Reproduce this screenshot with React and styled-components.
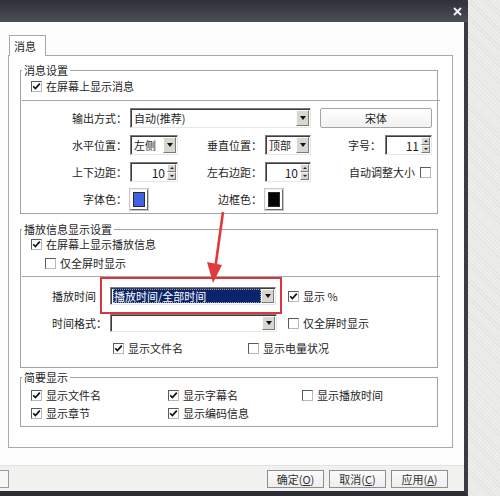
import React from 'react';
import styled, { createGlobalStyle } from 'styled-components';

// Classic-style settings dialog, "消息" tab

const GlobalStyle = createGlobalStyle`
  *, *::before, *::after { box-sizing: border-box; }
  html, body { margin: 0; padding: 0; }
  body {
    width: 500px;
    height: 496px;
    overflow: hidden;
    background: #e9e9e7;
    font-family: 'Noto Sans CJK SC', 'Liberation Sans', sans-serif;
    font-size: 11px;
    color: #1e1e1e;
  }
`;

const Page = styled.div`
  position: relative;
  width: 500px;
  height: 496px;
  display: flex;
  background: repeating-linear-gradient(45deg, #ededeb 0 2px, #e3e3e1 2px 3px);
`;

const Window = styled.div`
  width: 468px;
  height: 496px;
  display: flex;
  flex-direction: column;
  background: #fcfcfc;
  border-right: 4px solid #3a3c44;
  border-bottom: 5px solid #2c2e34;
`;

const TitleBar = styled.div`
  height: 22px;
  flex: none;
  display: flex;
  justify-content: flex-end;
  align-items: center;
  padding-right: 2px;
  background: linear-gradient(#2f3139, #4b4e58);
  border-top-right-radius: 5px;
  margin-right: -4px;
`;

const CloseIcon = styled.svg`
  width: 9px;
  height: 9px;
  margin-right: 4px;
`;

const Body = styled.div`
  flex: 1;
  display: flex;
  flex-direction: column;
  padding: 13px 0 0 8px;
`;

const TabStrip = styled.div`
  display: flex;
  height: 21px;
  margin-bottom: -1px;
  padding-left: 1px;
`;

const Tab = styled.div`
  position: relative;
  z-index: 1;
  width: 37px;
  height: 21px;
  border: 1px solid #a9a9a9;
  border-bottom: none;
  background: #fff;
  padding-left: 4px;
  line-height: 20px;
`;

const Panel = styled.div`
  width: 445px;
  height: 393px;
  border: 1px solid #a9a9a9;
  background: #fff;
  padding: 7px 0 0 11px;
`;

const Group = styled.fieldset`
  width: 418px;
  margin: ${p => p.$top || 0}px 0 0 0;
  padding: 0 6px ${p => p.$bottom || 4}px 10px;
  border: 1px solid #a3a3a3;
  min-width: 0;
`;

const Legend = styled.legend`
  margin-left: -9px;
  padding: 0 2px;
  line-height: 14px;
`;

const Separator = styled.div`
  height: 1px;
  margin: 5px -9px 0 -9px;
  background: #a8a8a8;
`;

const Line = styled.div`
  display: flex;
  align-items: center;
  height: ${p => p.$h || 18}px;
  margin-top: ${p => p.$mt || 0}px;
  padding-left: ${p => p.$indent || 0}px;
`;

const SettingsGrid = styled.div`
  display: grid;
  grid-template-columns: 99px 48px 87px 46px 74px 47px;
  grid-auto-rows: 20px;
  row-gap: 7px;
  margin-top: 7px;
  align-items: center;
`;

const FieldLabel = styled.span`
  justify-self: end;
  padding-right: ${p => p.$pr ?? 3}px;
  white-space: nowrap;
`;

const Span = styled.div`
  grid-column: ${p => p.$col};
  display: flex;
  align-items: center;
  justify-content: ${p => p.$justify || 'flex-start'};
  height: 20px;
  padding-left: ${p => p.$pl || 0}px;
  padding-right: ${p => p.$pr || 0}px;
`;

const PlayGrid = styled.div`
  display: grid;
  grid-template-columns: 79px 167px auto;
  align-items: center;
`;

const PlayLabel = styled.span`
  padding-left: 21px;
  white-space: nowrap;
`;

const BriefGrid = styled.div`
  display: grid;
  grid-template-columns: 137px 134px auto;
  grid-auto-rows: 18px;
  align-items: center;
  margin-top: 2px;
`;

const Sunken = styled.div`
  display: flex;
  align-items: stretch;
  width: ${p => p.$w}px;
  height: ${p => p.$h || 20}px;
  border: 1px solid;
  border-color: #7c7c7c #e6e6e6 #e6e6e6 #7c7c7c;
  box-shadow: inset 1px 1px 0 #3c3c3c;
  background: #fff;
  padding: 1px 1px 1px 2px;
`;

const SelectText = styled.div`
  flex: 1;
  display: flex;
  align-items: center;
  padding-left: 1px;
  white-space: nowrap;
  overflow: hidden;
  color: ${p => (p.$active ? '#fff' : 'inherit')};
  background: ${p => (p.$active ? '#0b246b' : 'transparent')};
  outline: ${p => (p.$active ? '1px dotted #8fa0d0' : 'none')};
  outline-offset: -1px;
`;

const DropButton = styled.div`
  width: 13px;
  flex: none;
  display: flex;
  align-items: center;
  justify-content: center;
  background: #d9d6cf;
  border: 1px solid;
  border-color: #fafafa #7a7a7a #7a7a7a #fafafa;
  &::after {
    content: '';
    border-left: 3.5px solid transparent;
    border-right: 3.5px solid transparent;
    border-top: 4px solid #111;
  }
`;

const SpinValue = styled.div`
  flex: 1;
  display: flex;
  align-items: center;
  justify-content: flex-end;
  padding-right: 2px;
  font-size: 12px;
`;

const SpinButtons = styled.div`
  width: 9px;
  flex: none;
  display: flex;
  flex-direction: column;
`;

const SpinArrow = styled.div`
  flex: 1;
  display: flex;
  align-items: center;
  justify-content: center;
  background: #d9d6cf;
  border: 1px solid;
  border-color: #fafafa #7a7a7a #7a7a7a #fafafa;
  &::after {
    content: '';
    border-left: 2px solid transparent;
    border-right: 2px solid transparent;
    ${p => (p.$up ? 'border-bottom: 2px solid #222;' : 'border-top: 2px solid #222;')}
  }
`;

const Swatch = styled.div`
  width: 18px;
  height: 21px;
  border: 1px solid;
  border-color: #f4f4f4 #6c6c6c #6c6c6c #f4f4f4;
  box-shadow: 0 0 0 1px #c8c8c8;
  padding: 2px;
  &::after {
    content: '';
    display: block;
    width: 100%;
    height: 100%;
    background: ${p => p.$color};
    border: 1px solid #2a2a2a;
  }
`;

const FontButton = styled.div`
  width: 112px;
  height: 20px;
  margin-left: 9px;
  display: flex;
  align-items: center;
  justify-content: center;
  border: 1px solid #a4a4a4;
  border-radius: 2px;
  background: linear-gradient(#ffffff, #f1f1f1);
`;

const CheckItem = styled.label`
  display: inline-flex;
  align-items: center;
  gap: 4px;
  white-space: nowrap;
`;

const Box = styled.span`
  width: 11px;
  height: 11px;
  flex: none;
  display: inline-flex;
  align-items: center;
  justify-content: center;
  border: 1px solid;
  border-color: #5a5a5a #b8b8b8 #b8b8b8 #5a5a5a;
  background: #fff;
`;

const Footer = styled.div`
  height: 26px;
  flex: none;
  display: flex;
  align-items: flex-start;
  padding: 4px 16px 0 0;
  background: #f1f1f0;
  border-top: 1px solid #e2e2e2;
`;

const EdgeButton = styled.div`
  width: 9px;
  height: 18px;
  border: 1px solid #9a9a9a;
  border-left: none;
  background: #f6f6f6;
`;

const ButtonRow = styled.div`
  display: flex;
  gap: 5px;
  margin-left: auto;
`;

const DialogButton = styled.div`
  width: 57px;
  height: 18px;
  display: flex;
  align-items: center;
  justify-content: center;
  border: 1px solid #8e8e8e;
  background: linear-gradient(#fbfbfb, #eeeeee);
  color: #333;
  u { text-decoration: underline; }
`;

const Highlight = styled.div`
  position: absolute;
  left: 100px;
  top: 277px;
  width: 182px;
  height: 37px;
  border: 2px solid #d5383f;
  pointer-events: none;
`;

const ArrowLayer = styled.svg`
  position: absolute;
  left: 0;
  top: 0;
  width: 500px;
  height: 496px;
  pointer-events: none;
`;

const Check = ({ checked, children }) => (
  <CheckItem>
    <Box>
      {checked && (
        <svg width="9" height="9" viewBox="0 0 9 9">
          <path d="M1.2 4.2 L3.4 6.6 L7.8 1.6" fill="none" stroke="#111" strokeWidth="1.7" />
        </svg>
      )}
    </Box>
    {children}
  </CheckItem>
);

const Select = ({ w, h, value, active }) => (
  <Sunken $w={w} $h={h}>
    <SelectText $active={active}>{value}</SelectText>
    <DropButton />
  </Sunken>
);

const Spinner = ({ w, value }) => (
  <Sunken $w={w}>
    <SpinValue>{value}</SpinValue>
    <SpinButtons>
      <SpinArrow $up />
      <SpinArrow />
    </SpinButtons>
  </Sunken>
);

const App = () => {
  return (
    <Page>
      <GlobalStyle />
      <Window>
        <TitleBar>
          <CloseIcon viewBox="0 0 9 9">
            <path d="M1 1 L8 8 M8 1 L1 8" stroke="#f2f2f2" strokeWidth="2" />
          </CloseIcon>
        </TitleBar>

        <Body>
          <TabStrip>
            <Tab>消息</Tab>
          </TabStrip>
          <Panel>
            <Group>
              <Legend>消息设置</Legend>
              <Line>
                <Check checked>在屏幕上显示消息</Check>
              </Line>
              <Separator />
              <SettingsGrid>
                <FieldLabel>输出方式：</FieldLabel>
                <Span $col="2 / 5">
                  <Select w={181} value="自动(推荐)" />
                </Span>
                <Span $col="5 / 7">
                  <FontButton>宋体</FontButton>
                </Span>

                <FieldLabel>水平位置：</FieldLabel>
                <Select w={48} value="左侧" />
                <FieldLabel>垂直位置：</FieldLabel>
                <Select w={46} value="顶部" />
                <FieldLabel $pr={4}>字号：</FieldLabel>
                <Spinner w={47} value="11" />

                <FieldLabel>上下边距：</FieldLabel>
                <Spinner w={48} value="10" />
                <FieldLabel>左右边距：</FieldLabel>
                <Spinner w={46} value="10" />
                <Span $col="5 / 7" $justify="flex-end" $pr={1}>
                  <CheckItem style={{ flexDirection: 'row-reverse', gap: 5 }}>
                    <Box />
                    自动调整大小
                  </CheckItem>
                </Span>

                <FieldLabel>字体色：</FieldLabel>
                <Swatch $color="#3f63e2" />
                <FieldLabel>边框色：</FieldLabel>
                <Swatch $color="#050505" />
              </SettingsGrid>
            </Group>

            <Group $top={8} $bottom={11}>
              <Legend>播放信息显示设置</Legend>
              <Line $h={16}>
                <Check checked>在屏幕上显示播放信息</Check>
              </Line>
              <Line $h={16} $mt={3} $indent={14}>
                <Check>仅全屏时显示</Check>
              </Line>
              <Separator />
              <PlayGrid style={{ marginTop: 10, rowGap: 9 }}>
                <PlayLabel>播放时间</PlayLabel>
                <Select w={166} h={18} value="播放时间/全部时间" active />
                <Line style={{ paddingLeft: 11 }}>
                  <Check checked>显示 %</Check>
                </Line>

                <PlayLabel>时间格式：</PlayLabel>
                <Select w={167} h={18} value="" />
                <Line style={{ paddingLeft: 11 }}>
                  <Check>仅全屏时显示</Check>
                </Line>
              </PlayGrid>
              <Line $mt={8} $h={16} style={{ paddingLeft: 82, gap: 0 }}>
                <span style={{ width: 135 }}>
                  <Check checked>显示文件名</Check>
                </span>
                <Check>显示电量状况</Check>
              </Line>
            </Group>

            <Group $top={2}>
              <Legend>简要显示</Legend>
              <BriefGrid>
                <Check checked>显示文件名</Check>
                <Check checked>显示字幕名</Check>
                <Check>显示播放时间</Check>
                <Check checked>显示章节</Check>
                <Check checked>显示编码信息</Check>
              </BriefGrid>
            </Group>
          </Panel>
        </Body>

        <Footer>
          <EdgeButton />
          <ButtonRow>
            <DialogButton>确定(<u>O</u>)</DialogButton>
            <DialogButton>取消(<u>C</u>)</DialogButton>
            <DialogButton>应用(<u>A</u>)</DialogButton>
          </ButtonRow>
        </Footer>
      </Window>

      <Highlight />
      <ArrowLayer viewBox="0 0 500 496">
        <path d="M223 212 L215.5 266" stroke="#e03a3c" strokeWidth="2.6" fill="none" />
        <path d="M207 262 L222 265 L213 283 Z" fill="#e03a3c" />
      </ArrowLayer>
    </Page>
  );
};

export default App;
